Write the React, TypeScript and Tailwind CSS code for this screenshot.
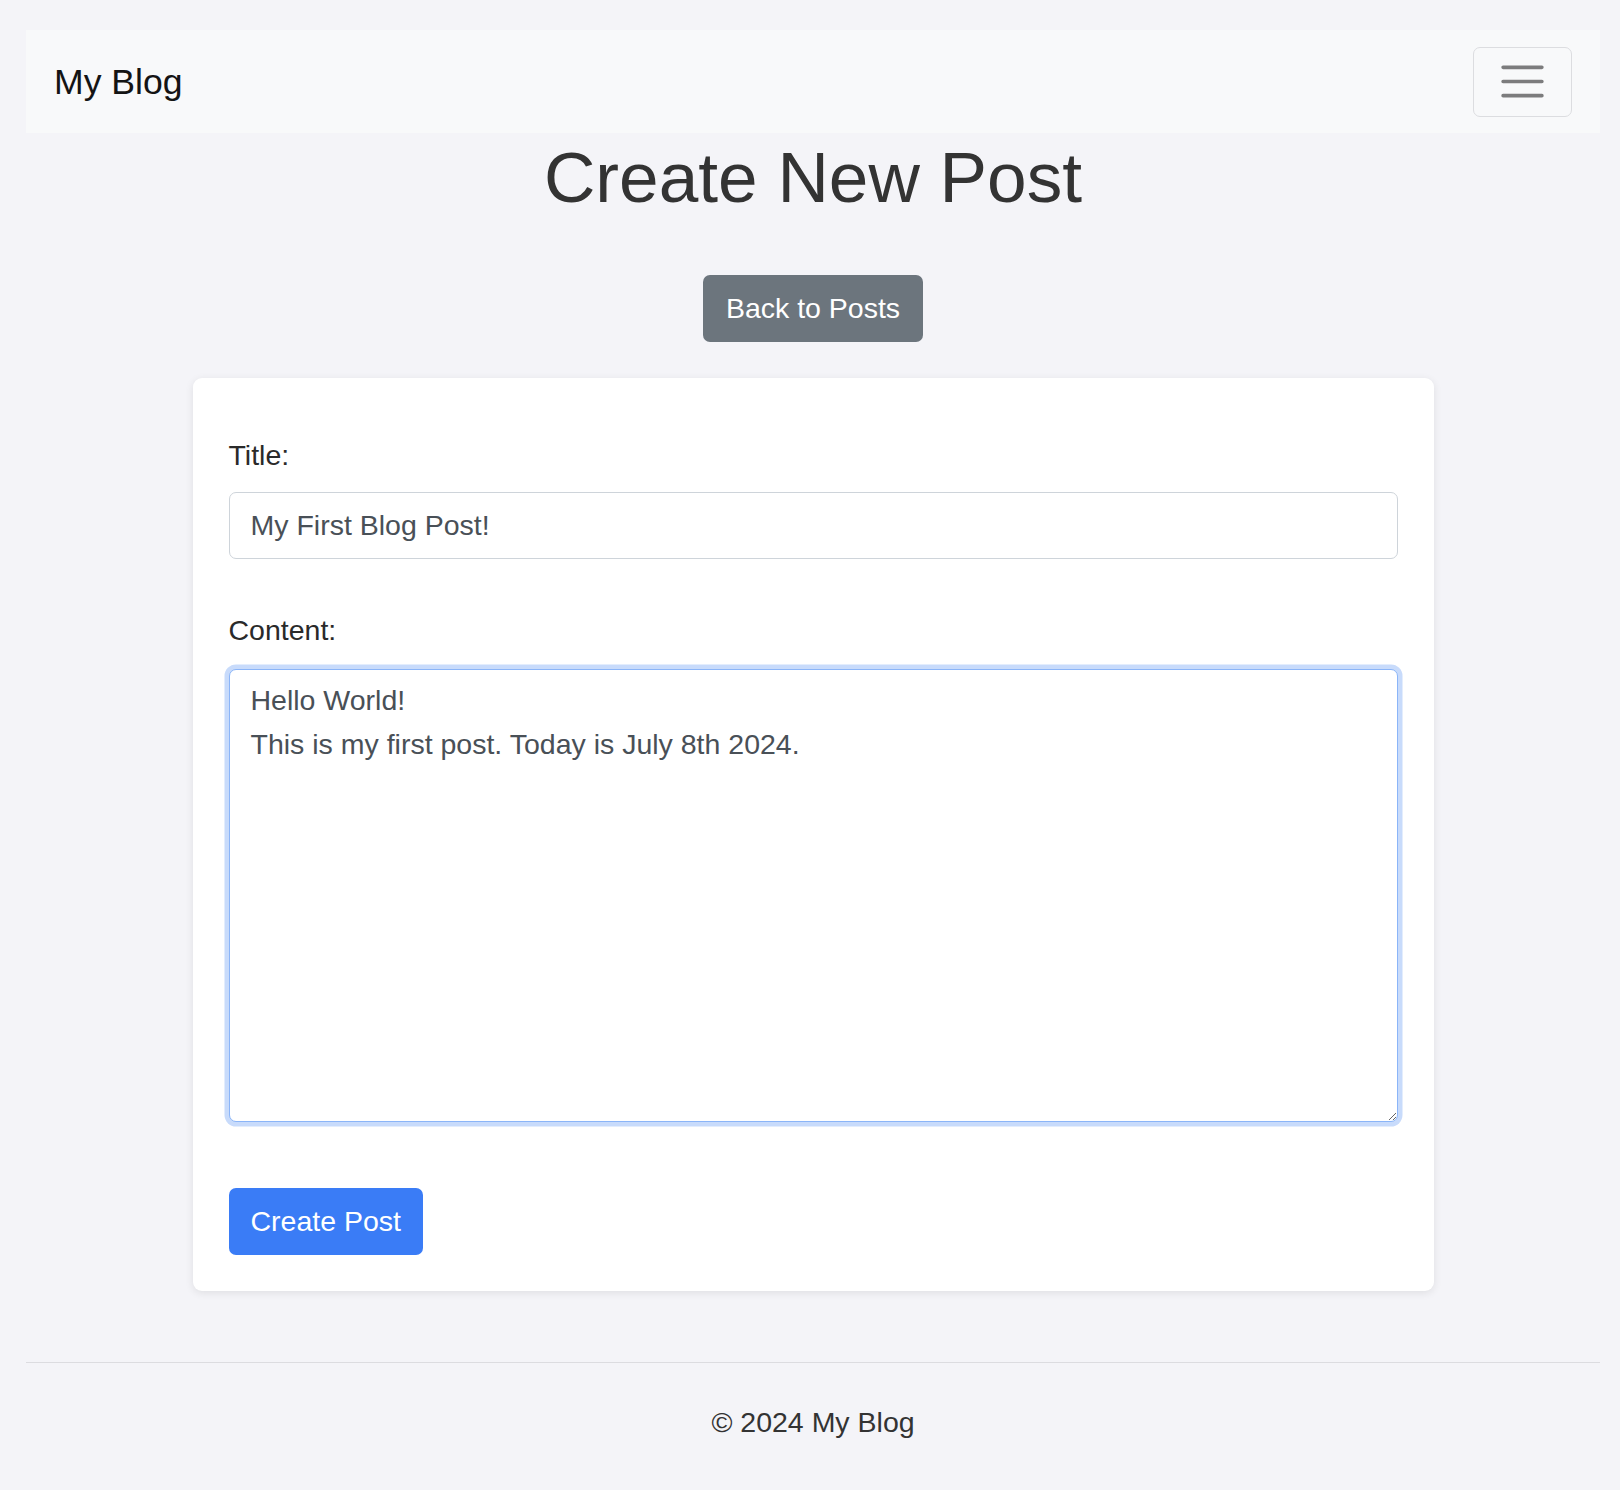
import React, { useEffect, useRef } from "react";

export default function App() {
  const taRef = useRef<HTMLTextAreaElement>(null);
  useEffect(() => {
    const t = taRef.current;
    if (t) {
      t.focus();
      const n = t.value.length;
      t.setSelectionRange(n, n);
    }
  }, []);

  return (
    <div className="h-[1490px] overflow-hidden bg-[#f4f4f8] pt-[30px] pl-[26px] pr-[20px] font-['Liberation_Sans',Arial,sans-serif] text-[28.5px] leading-[43px] text-[#212529]">
      <nav className="flex h-[103px] items-center justify-between bg-[#f8f9fa] px-[28px]">
        <span className="text-[35.6px] leading-[54px] text-[#141414]">My Blog</span>
        <button className="flex h-[70px] w-[99px] items-center justify-center rounded-[7px] border border-[#dcdde0]">
          <svg width="53" height="53" viewBox="0 0 30 30">
            <path
              d="M4 7h22M4 15h22M4 23h22"
              stroke="rgba(0,0,0,0.5)"
              strokeWidth="2"
              strokeLinecap="round"
              fill="none"
            />
          </svg>
        </button>
      </nav>

      <main>
        <h1 className="mt-[2px] text-center text-[71.2px] leading-[85px] text-[#333]">Create New Post</h1>
        <div className="mt-[55px] flex justify-center">
          <button className="h-[67px] rounded-[7px] bg-[#6c757d] px-[23px] text-[28.5px] leading-[43px] text-white">
            Back to Posts
          </button>
        </div>

        <div className="mx-auto mt-[36px] w-[1241px] rounded-[9px] bg-white p-[36px] shadow-[0_2px_8px_rgba(0,0,0,0.09)]">
          <label className="mt-[20px] block leading-[43px] text-[#2a2a2a]">Title:</label>
          <input
            defaultValue="My First Blog Post!"
            className="mt-[15px] block h-[67px] w-full rounded-[7px] border border-[#ced4da] bg-white px-[21px] text-[28.5px] text-[#495057] outline-none"
          />
          <label className="mt-[50px] block leading-[43px] text-[#2a2a2a]">Content:</label>
          <textarea
            ref={taRef}
            defaultValue={"Hello World!\nThis is my first post. Today is July 8th 2024."}
            className="mt-[17px] block h-[453px] w-full rounded-[7px] border border-[#8bb5f8] bg-white px-[21px] pt-[8px] pb-[6px] text-[28.5px] leading-[44px] text-[#495057] caret-[#222] shadow-[0_0_0_4.5px_#c8dbfb] outline-none"
          />
          <button className="mt-[66px] h-[67px] rounded-[7px] bg-[#3a7cf6] px-[22px] text-[28.5px] leading-[43px] text-white">
            Create Post
          </button>
        </div>
      </main>

      <footer className="mt-[71px] border-t border-[#dcdce0] pt-[38px] text-center text-[#333]">
        © 2024 My Blog
      </footer>
    </div>
  );
}
